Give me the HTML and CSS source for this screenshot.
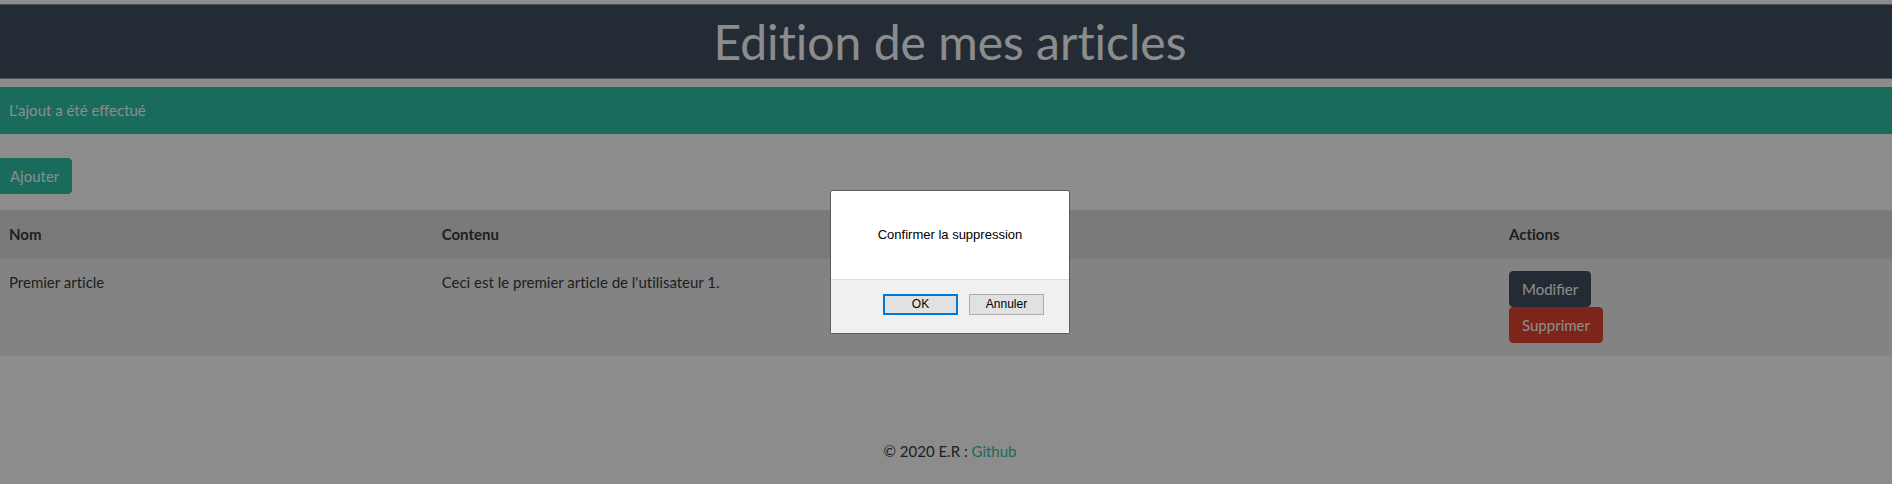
FILE: index.html
```html
<!DOCTYPE html>
<html lang="fr">
<head>
<meta charset="utf-8">
<title>Edition de mes articles</title>
<link rel="stylesheet" href="styles.css">
</head>
<body>
<div class="page">
  <header class="banner"><h1 class="banner-title">Edition de mes articles</h1></header>
  <main>
    <div class="alert" role="status">L'ajout a été effectué</div>
    <button type="button" class="btn btn-success btn-add">Ajouter</button>
    <table class="table">
      <thead>
        <tr><th class="col-name" scope="col">Nom</th><th class="col-content" scope="col">Contenu</th><th scope="col">Actions</th></tr>
      </thead>
      <tbody>
        <tr>
          <td>Premier article</td>
          <td>Ceci est le premier article de l'utilisateur 1.</td>
          <td>
            <div class="actions">
              <button type="button" class="btn btn-primary">Modifier</button>
              <button type="button" class="btn btn-danger">Supprimer</button>
            </div>
          </td>
        </tr>
      </tbody>
    </table>
  </main>
  <footer class="footer">© 2020 E.R : <a class="link" href="#">Github</a></footer>
  <div class="overlay">
    <div class="dialog" role="alertdialog" aria-modal="true" aria-labelledby="dialog-message">
      <p class="dialog-message" id="dialog-message">Confirmer la suppression</p>
      <div class="dialog-buttons">
        <button type="button" class="dialog-btn dialog-btn-default">OK</button>
        <button type="button" class="dialog-btn">Annuler</button>
      </div>
    </div>
  </div>
</div>
</body>
</html>
```
FILE: styles.css
```css
* { box-sizing: border-box; }
html { overflow: hidden; }
body {
  margin: 0;
  background: #fff;
  color: #212529;
  font: 15px/23px Lato, "Liberation Sans", sans-serif;
}
.page {
  position: relative;
  min-height: 100vh;
  margin: 0 -11px 0 -3px;
  padding-top: 4px;
}
.banner {
  padding: 8px;
  border: 1px solid #7b8a8b;
  background: #2c3e50;
  color: #fff;
  text-align: center;
}
.banner-title {
  margin: 0;
  font-size: 48px;
  line-height: 57px;
  font-weight: 400;
  font-variant-ligatures: no-common-ligatures;
}
.alert {
  margin: 8px 0 24px;
  padding: 12px;
  background: #18bc9c;
  color: #fff;
}
.btn {
  display: block;
  padding: 6px 12px;
  border: 1px solid transparent;
  border-radius: 4px;
  color: #fff;
  font: inherit;
  line-height: 22px;
}
.btn-add { margin-bottom: 16px; }
.btn-success { background: #18bc9c; border-color: #18bc9c; }
.btn-primary { background: #2c3e50; border-color: #2c3e50; }
.btn-danger { background: #e12e1c; border-color: #e12e1c; }
.table {
  width: 100%;
  border-collapse: separate;
  border-spacing: 0;
  table-layout: fixed;
  font-variant-ligatures: no-common-ligatures;
}
.table th, .table td {
  border-top: 1px solid #dfdfdf;
  text-align: left;
  vertical-align: top;
}
.table th { padding: 12px; background: #dadada; }
.table td { padding: 12px 12px 13px; background: #ececec; }
.col-name { width: 22.7%; }
.col-content { width: 56%; }
.actions {
  display: flex;
  flex-direction: column;
  align-items: flex-start;
  font-variant-ligatures: normal;
}
.footer { margin-top: 84px; text-align: center; }
.link { color: #18bc9c; text-decoration: none; }
.overlay {
  position: absolute;
  inset: 0;
  display: flex;
  justify-content: center;
  align-items: flex-start;
  padding-top: 190px;
  background: rgba(26, 26, 26, 0.5);
}
.dialog {
  width: 240px;
  border: 1px solid #5c5c5c;
  border-radius: 2px;
  background: #fff;
  color: #000;
  font: 12px/16px "Liberation Sans", Arial, sans-serif;
}
.dialog-message { margin: 0; padding: 36px 16px; font-size: 13px; text-align: center; }
.dialog-buttons {
  display: flex;
  justify-content: flex-end;
  gap: 11px;
  padding: 14px 25px 18px;
  border-top: 1px solid #dfdfdf;
  background: #f0f0f0;
}
.dialog-btn {
  width: 75px;
  height: 21px;
  padding: 0 0 2px;
  border: 1px solid #adadad;
  background: #e1e1e1;
  color: #000;
  font: inherit;
}
.dialog-btn-default { border: 2px solid #0078d7; }
```
